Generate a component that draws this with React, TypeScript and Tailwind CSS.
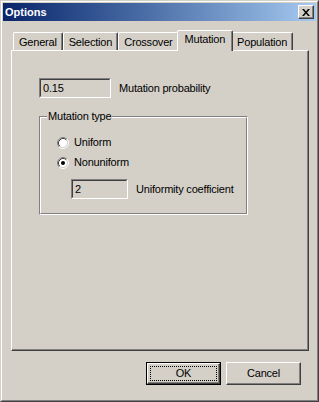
const tabs = ['General', 'Selection', 'Crossover', 'Mutation', 'Population']

function Radio({ checked }: { checked?: boolean }) {
  return (
    <svg width="12" height="12" viewBox="0 0 12 12" className="shrink-0">
      <circle cx="6" cy="6" r="4.5" fill="#ffffff" />
      <path d="M2.11 9.89 A5.5 5.5 0 0 1 9.89 2.11" fill="none" stroke="#808080" strokeWidth="1" />
      <path d="M9.89 2.11 A5.5 5.5 0 0 1 2.11 9.89" fill="none" stroke="#ffffff" strokeWidth="1" />
      <path d="M2.82 9.18 A4.5 4.5 0 0 1 9.18 2.82" fill="none" stroke="#404040" strokeWidth="1" />
      <path d="M9.18 2.82 A4.5 4.5 0 0 1 2.82 9.18" fill="none" stroke="#d4d0c8" strokeWidth="1" />
      {checked && <circle cx="6" cy="6" r="2" fill="#000000" />}
    </svg>
  )
}

function Edit({ value, className }: { value: string; className: string }) {
  return (
    <div className={`h-[20px] border border-t-[#808080] border-l-[#808080] border-r-white border-b-white ${className}`}>
      <div className="h-full border border-t-[#404040] border-l-[#404040] border-r-[#d4d0c8] border-b-[#d4d0c8] bg-[#d4d0c8] flex items-center pl-[2px] text-black">
        {value}
      </div>
    </div>
  )
}

export default function App() {
  return (
    <div className="w-[319px] h-[402px] bg-[#d4d0c8] border border-t-[#d4d0c8] border-l-[#d4d0c8] border-r-[#404040] border-b-[#404040] font-['Liberation_Sans',Arial,sans-serif] text-[11px] tracking-[-0.2px] text-black leading-none">
      <div className="h-full border border-t-white border-l-white border-r-[#808080] border-b-[#808080] p-px flex flex-col">
        {/* title bar */}
        <div className="h-[18px] bg-linear-to-r from-[#0a246a] to-[#a6caf0] flex items-center justify-between pl-[2px] pr-[2px]">
          <span className="text-white font-bold tracking-normal">Options</span>
          <div className="w-[16px] h-[14px] border border-t-white border-l-white border-r-[#404040] border-b-[#404040] shadow-[inset_-1px_-1px_0_#808080] bg-[#d4d0c8] flex items-center justify-center">
            <svg width="8" height="7" viewBox="0 0 8 7">
              <path d="M0 0 L2 0 L4 2.5 L6 0 L8 0 L5 3.5 L8 7 L6 7 L4 4.5 L2 7 L0 7 L3 3.5 Z" fill="#000000" />
            </svg>
          </div>
        </div>

        {/* body */}
        <div className="flex-1 flex flex-col pl-[8px] pt-[9px]">
          <div className="flex items-end h-[20px] pl-[2px] relative z-10">
            {tabs.map((t) =>
              t === 'Mutation' ? (
                <div
                  key={t}
                  className="h-[21px] -mb-px -mx-[2px] px-[7px] bg-[#d4d0c8] border-t border-l border-r border-t-white border-l-white border-r-[#404040] shadow-[inset_-1px_0_0_#808080] rounded-t-[2px] flex items-center pb-[3px] relative z-10"
                >
                  {t}
                </div>
              ) : (
                <div
                  key={t}
                  className="h-[18px] px-[5px] border-t border-l border-r border-t-white border-l-white border-r-[#404040] shadow-[inset_-1px_0_0_#808080] rounded-t-[2px] flex items-center pt-[1px]"
                >
                  {t}
                </div>
              )
            )}
          </div>

          <div className="w-[298px] h-[301px] border border-t-white border-l-white border-r-[#404040] border-b-[#404040] shadow-[inset_-1px_-1px_0_#808080] pl-[27px] pt-[27px]">
            <div className="flex items-center gap-[8px]">
              <Edit value="0.15" className="w-[72px]" />
              <span>Mutation probability</span>
            </div>

            <div className="relative mt-[18px] w-[209px] h-[99px] border border-t-[#808080] border-l-[#808080] border-r-white border-b-white">
              <span className="absolute -top-[6px] left-[7px] px-px bg-[#d4d0c8]">Mutation type</span>
              <div className="h-full border border-t-white border-l-white border-r-[#808080] border-b-[#808080] pl-[16px] pt-[18px]">
                <div className="flex items-center gap-[5px] h-[13px]">
                  <Radio />
                  <span>Uniform</span>
                </div>
                <div className="flex items-center gap-[5px] h-[13px] mt-[7px]">
                  <Radio checked />
                  <span>Nonuniform</span>
                </div>
                <div className="flex items-center gap-[8px] mt-[10px] ml-[14px]">
                  <Edit value="2" className="w-[57px]" />
                  <span>Uniformity coefficient</span>
                </div>
              </div>
            </div>
          </div>

          <div className="w-[298px] flex justify-end gap-[5px] pr-[8px] mt-[11px]">
            <div className="w-[75px] h-[23px] border border-black">
              <div className="h-full border border-t-white border-l-white border-r-[#404040] border-b-[#404040] shadow-[inset_-1px_-1px_0_#808080] p-[2px]">
                <div className="h-full border border-dotted border-black flex items-center justify-center">OK</div>
              </div>
            </div>
            <div className="w-[75px] h-[23px] border border-t-white border-l-white border-r-[#404040] border-b-[#404040] shadow-[inset_-1px_-1px_0_#808080] flex items-center justify-center">
              Cancel
            </div>
          </div>
        </div>
      </div>
    </div>
  )
}
